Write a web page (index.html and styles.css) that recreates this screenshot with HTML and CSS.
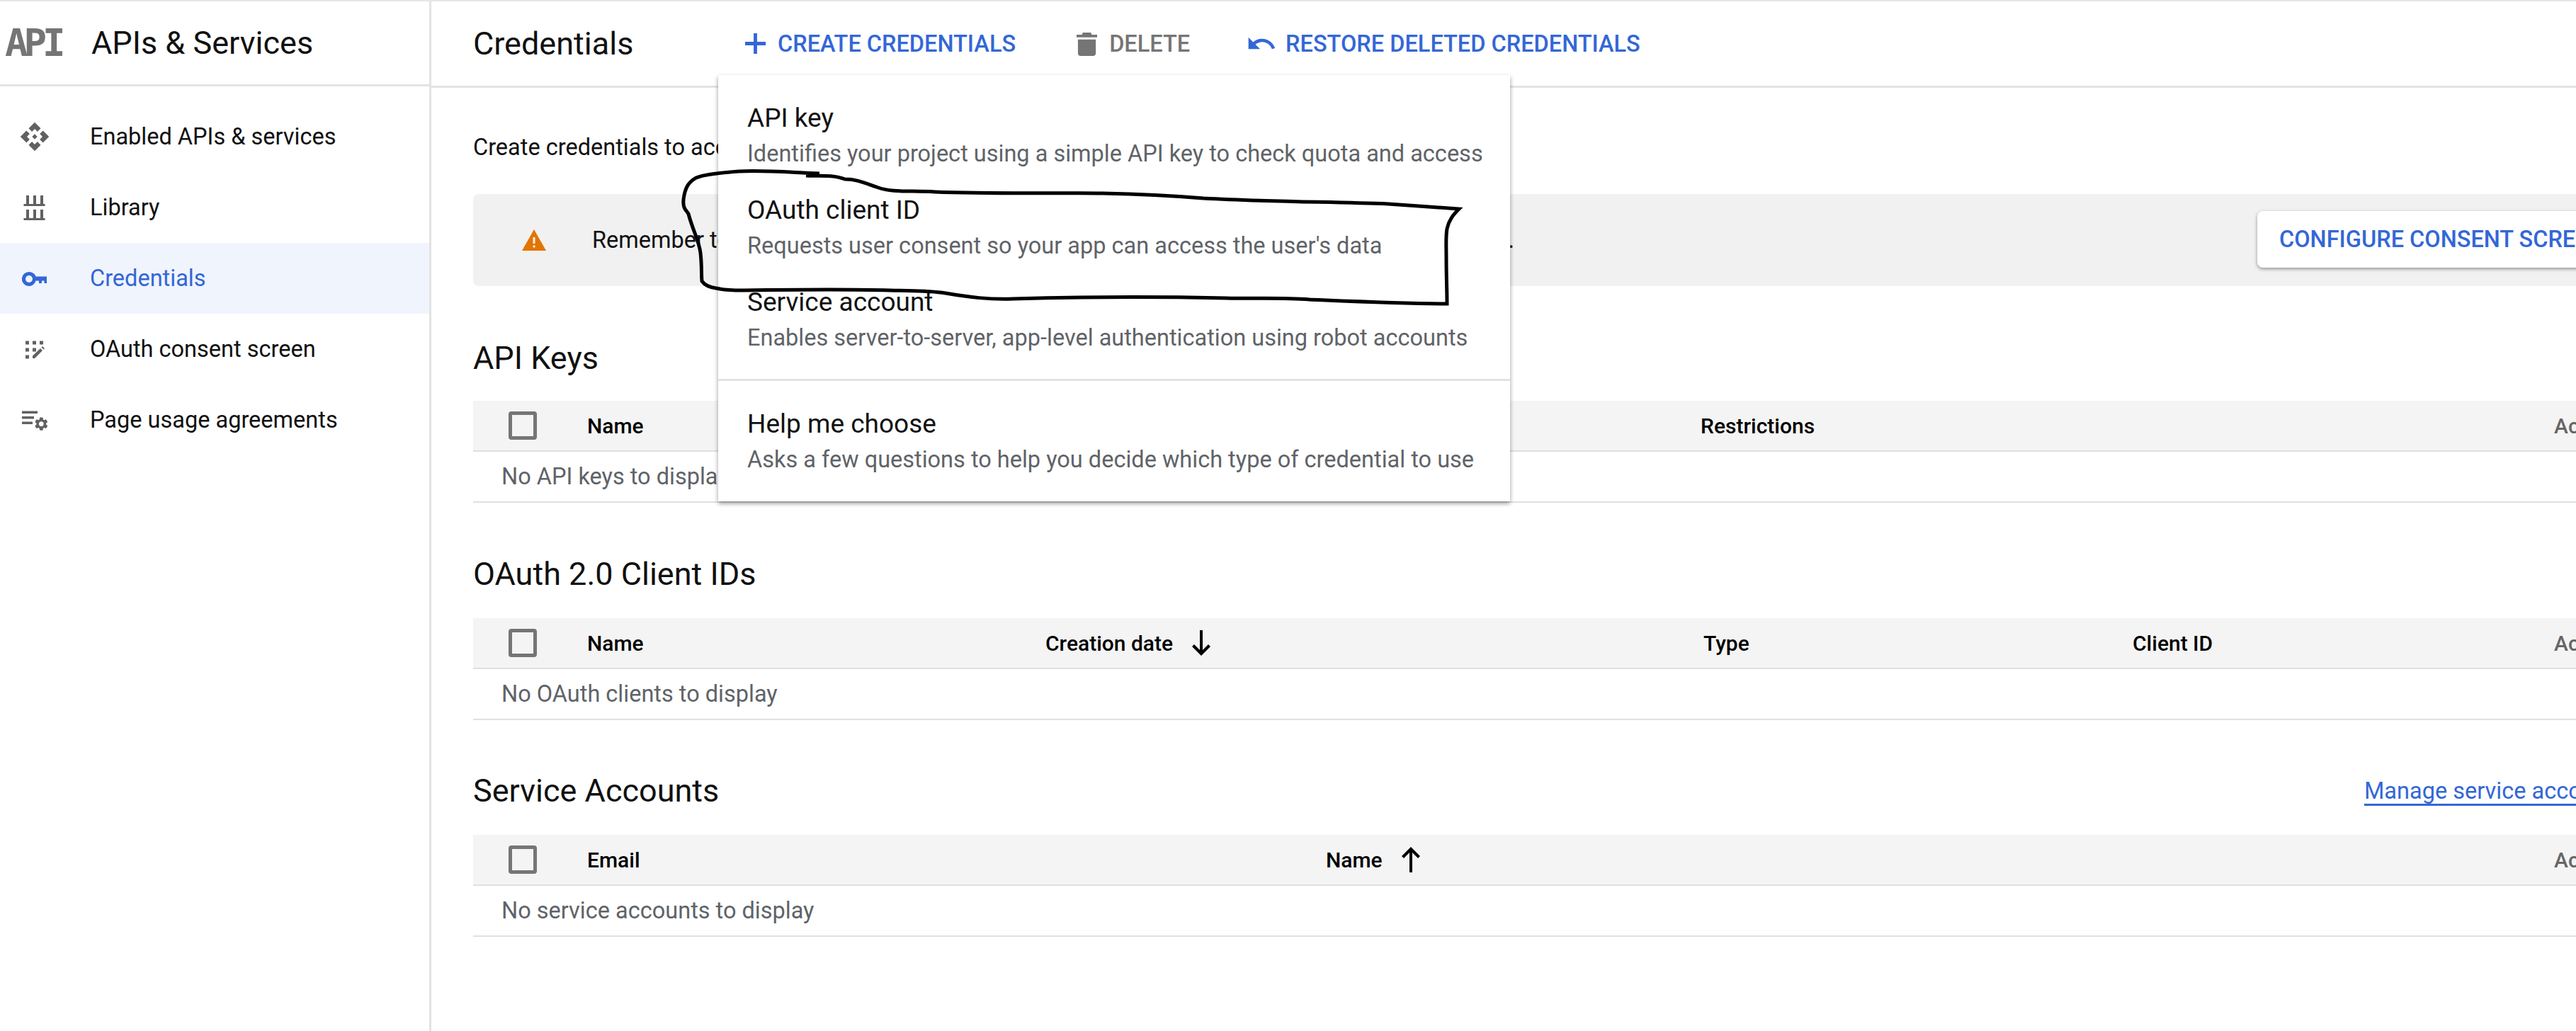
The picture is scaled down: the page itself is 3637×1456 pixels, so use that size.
FILE: index.html
```html
<!DOCTYPE html>
<html lang="en">
<head>
    <meta charset="UTF-8">
    <meta name="viewport" content="width=device-width, initial-scale=1.0">
    <title>Credentials</title>
    <link rel="stylesheet" href="styles.css">
</head>
<body>
    <aside class="sidebar">
        <div class="product">
            <span class="api-logo">API</span>
            <span class="product-name">APIs &amp; Services</span>
        </div>
        <nav class="nav">
            <a class="nav-item">
                <svg class="nav-icon" viewBox="0 0 24 24"><path d="M14 12l-2 2-2-2 2-2 2 2zm-2-6l2.12 2.12 2.5-2.5L12 1 7.38 5.62l2.5 2.5L12 6zm-6 6l2.12-2.12-2.5-2.5L1 12l4.62 4.62 2.5-2.5L6 12zm12 0l-2.12 2.12 2.5 2.5L23 12l-4.62-4.62-2.5 2.5L18 12zm-6 6l-2.12-2.12-2.5 2.5L12 23l4.62-4.62-2.5-2.5L12 18z"/></svg>
                Enabled APIs &amp; services
            </a>
            <a class="nav-item">
                <svg class="nav-icon" viewBox="0 0 44 44"><path d="M10 5h4v13h-4zM20 5h4v13h-4zM30 5h4v13h-4zM6.500 17h30v3h-30zM10 25h4v13h-4zM20 25h4v13h-4zM30 25h4v13h-4zM6.500 37h30v3h-30z"/></svg>
                Library
            </a>
            <a class="nav-item active">
                <svg class="nav-icon" viewBox="0 0 44 44"><path d="M14 13a10 10 0 0 1 9.500 6.500H39V29h-3.500v-3.500H32V29h-4v-3.500h-4.500A10 10 0 1 1 14 13zm0 5a5 5 0 1 0 0 10 5 5 0 0 0 0-10z"/></svg>
                Credentials
            </a>
            <a class="nav-item">
                <svg class="nav-icon" viewBox="0 0 44 44"><path d="M9 10.500h5v5H9zM19 10.500h5v5h-5zM29 10.500h5v5h-5zM9 20.500h5v5H9zM19 20.500h5v5h-5zM9 30.500h5v5H9zM19 31.500l11-10.500 3 3-11 11h-3zM31.500 19.500l1.500-1.500 3 3-1.500 1.500z"/></svg>
                OAuth consent screen
            </a>
            <a class="nav-item">
                <svg class="nav-icon" viewBox="0 0 44 44"><path d="M4 9.500h22v3.500H4zM4 17h17v3.500H4zM4 24.500h15V28H4z"/><path transform="translate(31.300 27.700) scale(.95) translate(-12 -12)" d="M19.140 12.940c.04-.3.06-.61.06-.94 0-.32-.02-.64-.07-.94l2.030-1.580c.18-.14.23-.41.12-.61l-1.920-3.320c-.12-.22-.37-.29-.59-.22l-2.390.96c-.5-.38-1.030-.7-1.620-.94l-.36-2.540c-.04-.24-.24-.41-.48-.41h-3.840c-.24 0-.43.17-.47.41l-.36 2.540c-.59.24-1.130.57-1.620.94l-2.390-.96c-.22-.08-.47 0-.59.22L2.740 8.870c-.12.21-.08.47.12.61l2.030 1.580c-.05.3-.09.63-.09.94s.02.64.07.94l-2.030 1.580c-.18.14-.23.41-.12.61l1.920 3.320c.12.22.37.29.59.22l2.390-.96c.5.38 1.030.7 1.620.94l.36 2.540c.05.24.24.41.48.41h3.840c.24 0 .44-.17.47-.41l.36-2.540c.59-.24 1.130-.56 1.620-.94l2.390.96c.22.08.47 0 .59-.22l1.920-3.320c.12-.22.07-.47-.12-.61l-2.010-1.580zM12 15.600c-1.980 0-3.600-1.620-3.600-3.600s1.620-3.600 3.600-3.600 3.600 1.620 3.600 3.600-1.620 3.600-3.600 3.600z"/></svg>
                Page usage agreements
            </a>
        </nav>
    </aside>

    <div class="page">
        <header class="toolbar">
            <h1 class="page-title">Credentials</h1>
            <div class="actions">
                <button class="action create">
                    <svg class="action-icon" viewBox="0 0 32 32"><path d="M13.500 1h5v12.500H31v5H18.500V31h-5V18.500H1v-5h12.500z"/></svg>
                    Create credentials
                </button>
                <button class="action delete">
                    <svg class="action-icon" viewBox="0 0 32 36"><path d="M10 2h12l1 3h8v4H1V5h8zM3 12h26v20a4 4 0 0 1-4 4H7a4 4 0 0 1-4-4z"/></svg>
                    Delete
                </button>
                <button class="action restore">
                    <svg class="action-icon wide" viewBox="0 0 24 24"><path d="M12.500 8c-2.650 0-5.050.99-6.900 2.600L2 7v9h9l-3.620-3.620c1.390-1.160 3.160-1.880 5.120-1.880 3.540 0 6.550 2.310 7.600 5.500l2.370-.78C21.080 11.030 17.150 8 12.500 8z"/></svg>
                    Restore deleted credentials
                </button>
            </div>
        </header>

        <main class="content">
            <p class="intro">Create credentials to access your enabled APIs</p>

            <div class="banner">
                <svg class="banner-icon" viewBox="0 0 34 30"><path fill-rule="evenodd" d="M17 0l17 30H0zM15.500 11v9h3v-9zM15.500 22.500v3h3v-3z"/></svg>
                <span class="banner-text">Remember to configure the OAuth consent screen with information about your application.</span>
                <button class="banner-button">Configure consent screen</button>
            </div>

            <section class="block keys">
                <h2 class="block-title">API Keys</h2>
                <div class="table">
                    <div class="table-head">
                        <span class="check"></span>
                        <span class="col col-first">Name</span>
                        <span class="col col-restrictions">Restrictions</span>
                        <span class="col col-actions">Actions</span>
                    </div>
                    <div class="table-empty">No API keys to display</div>
                </div>
            </section>

            <section class="block clients">
                <h2 class="block-title">OAuth 2.0 Client IDs</h2>
                <div class="table">
                    <div class="table-head">
                        <span class="check"></span>
                        <span class="col col-first">Name</span>
                        <span class="col col-date">Creation date
                            <svg class="sort" viewBox="0 0 30 36"><path d="M13 0h4v28l8-8 3 3-13 13L2 23l3-3 8 8z"/></svg>
                        </span>
                        <span class="col col-type">Type</span>
                        <span class="col col-client">Client ID</span>
                        <span class="col col-actions">Actions</span>
                    </div>
                    <div class="table-empty">No OAuth clients to display</div>
                </div>
            </section>

            <section class="block accounts">
                <div class="block-top">
                    <h2 class="block-title">Service Accounts</h2>
                    <a class="manage">Manage service accounts</a>
                </div>
                <div class="table">
                    <div class="table-head">
                        <span class="check"></span>
                        <span class="col col-first">Email</span>
                        <span class="col col-name">Name
                            <svg class="sort" viewBox="0 0 30 36"><path d="M13 36h4V8l8 8 3-3L15 0 2 13l3 3 8-8z"/></svg>
                        </span>
                        <span class="col col-actions">Actions</span>
                    </div>
                    <div class="table-empty">No service accounts to display</div>
                </div>
            </section>
        </main>
    </div>

    <div class="menu">
        <div class="menu-item">
            <div class="menu-title">API key</div>
            <div class="menu-desc">Identifies your project using a simple API key to check quota and access</div>
        </div>
        <div class="menu-item">
            <div class="menu-title">OAuth client ID</div>
            <div class="menu-desc">Requests user consent so your app can access the user's data</div>
        </div>
        <div class="menu-item">
            <div class="menu-title">Service account</div>
            <div class="menu-desc">Enables server-to-server, app-level authentication using robot accounts</div>
        </div>
        <div class="menu-item help">
            <div class="menu-title">Help me choose</div>
            <div class="menu-desc">Asks a few questions to help you decide which type of credential to use</div>
        </div>
    </div>

    <!-- pen scribble drawn over the screenshot -->
    <svg class="scribble" viewBox="0 0 3637 1456">
        <path d="M1157 245C1110 243 1075 240 1043 242C1015 244 995 246 983 251C972 257 967 265 965 282C964 294 968 296 972 302C978 325 987 340 989 357C991 375 990 385 991 397C996 404 1003 406 1011 407C1025 410 1035 410 1047 410C1120 409 1190 408 1256 410C1290 411 1310 410 1335 414C1370 420 1395 423 1430 422C1530 419 1640 419 1731 421C1775 422 1810 420 1849 423C1920 426 1985 429 2043 429C2043 410 2042 390 2042 367C2042 345 2041 335 2043 323C2046 310 2052 303 2060 295C2030 293 1990 290 1960 288C1880 285 1790 285 1699 280C1650 276 1605 274 1557 273C1480 272 1400 274 1320 271C1285 269 1260 272 1240 265C1222 259 1210 253 1193 253C1175 246 1155 249 1138 248"/>
    </svg>
</body>
</html>
```

FILE: styles.css
```css
* {
    box-sizing: border-box;
}

html, body {
    height: 100%;
    overflow: hidden;
}

body {
    margin: 0;
    display: flex;
    position: relative;
    background-color: #fff;
    border-top: 2px solid #e6e6e6;
    color: #111;
    font-family: Roboto, "Liberation Sans", sans-serif;
    font-size: 32.5px;
}

.sidebar {
    width: 609px;
    flex: none;
    border-right: 3px solid #e3e3e3;
}

.product {
    height: 120px;
    display: flex;
    align-items: center;
    border-bottom: 3px solid #e3e3e3;
    margin-right: -3px;
}

.api-logo {
    width: 129px;
    padding-left: 7px;
    color: #757575;
    font-family: "DejaVu Sans Mono", monospace;
    font-weight: 700;
    font-size: 54px;
    line-height: 40px;
    letter-spacing: -6px;
}

.product-name {
    font-size: 45px;
}

.nav {
    padding-top: 21px;
}

.nav-item {
    height: 100px;
    display: flex;
    align-items: center;
    gap: 56px;
    padding-left: 27px;
}

.nav-icon {
    width: 44px;
    height: 44px;
    flex: none;
    fill: #616161;
}

.nav-item.active {
    background-color: #f0f4fd;
    color: #3367d6;
}

.nav-item.active .nav-icon {
    fill: #3367d6;
}

.page {
    flex: 1;
    min-width: 0;
}

.toolbar {
    height: 122px;
    display: flex;
    align-items: center;
    padding-left: 59px;
    border-bottom: 3px solid #e3e3e3;
}

.page-title {
    margin: 0;
    width: 383px;
    font-size: 45px;
    font-weight: 400;
}

.actions {
    display: flex;
    align-items: center;
    gap: 85px;
}

button {
    border: none;
    background: none;
    padding: 0;
    font-family: inherit;
    cursor: pointer;
}

.action {
    display: flex;
    align-items: center;
    gap: 16px;
    font-size: 32.5px;
    font-weight: 500;
    text-transform: uppercase;
}

.action-icon {
    width: 31px;
    height: 35px;
}

.action-icon.wide {
    width: 44px;
    height: 44px;
}

.create {
    color: #3367d6;
    fill: #3367d6;
}

.delete {
    color: #757575;
    fill: #757575;
}

.restore {
    margin-left: -6px;
    gap: 12px;
    color: #3367d6;
    fill: #3367d6;
}

.content {
    padding-left: 59px;
}

.intro {
    margin: 0;
    padding-top: 65px;
    line-height: 38px;
}

.banner {
    height: 130px;
    margin-top: 47px;
    display: flex;
    align-items: center;
    background-color: #f1f1f1;
    border-radius: 8px 0 0 8px;
    padding-left: 69px;
    white-space: nowrap;
}

.banner-icon {
    width: 34px;
    height: 30px;
    flex: none;
    fill: #e37400;
}

.banner-text {
    margin-left: 65px;
    width: 2351px;
    flex: none;
}

.banner-button {
    height: 80px;
    margin-top: -3px;
    padding: 0 31px;
    flex: none;
    background-color: #fff;
    border-radius: 8px;
    box-shadow: 0 2px 5px rgba(0, 0, 0, .4);
    color: #3367d6;
    font-size: 32.5px;
    font-weight: 500;
    text-transform: uppercase;
}

.block-title {
    margin: 0;
    font-size: 45px;
    font-weight: 400;
    line-height: 54px;
}

.keys {
    padding-top: 75px;
}

.clients {
    padding-top: 74px;
}

.accounts {
    padding-top: 73px;
}

.block-top {
    display: flex;
    justify-content: space-between;
    align-items: center;
    white-space: nowrap;
}

.manage {
    position: absolute;
    left: 3338px;
    color: #3367d6;
    text-decoration: underline;
    text-underline-offset: 7px;
}

.table {
    margin-top: 33px;
}

.clients .table,
.accounts .table {
    margin-top: 35px;
}

.table-head {
    height: 72px;
    position: relative;
    display: flex;
    align-items: center;
    background-color: #f4f4f4;
    border-bottom: 2px solid #e0e0e0;
    font-size: 30px;
    font-weight: 500;
    color: #000;
    white-space: nowrap;
}

.check {
    width: 40px;
    height: 40px;
    margin-left: 50px;
    border: 5px solid #757575;
    border-radius: 4px;
}

.col {
    position: absolute;
    display: flex;
    align-items: center;
    gap: 25px;
}

.col-first {
    left: 161px;
}

.col-restrictions {
    left: 1733px;
}

.col-date {
    left: 808px;
}

.col-type {
    left: 1737px;
}

.col-client {
    left: 2343px;
}

.col-name {
    left: 1204px;
}

.col-actions {
    left: 2938px;
    color: #666;
}

.sort {
    width: 30px;
    height: 36px;
    fill: #000;
}

.table-empty {
    height: 72px;
    display: flex;
    align-items: center;
    padding-left: 40px;
    border-bottom: 2px solid #e0e0e0;
    color: #5f6368;
}

.menu {
    position: absolute;
    left: 1014px;
    top: 104px;
    width: 1118px;
    height: 602px;
    padding-top: 39px;
    background-color: #fff;
    box-shadow: 0 3px 6px rgba(0, 0, 0, .4);
}

.menu-item {
    height: 130px;
    padding: 0 41px;
    white-space: nowrap;
}

.menu-item.help {
    margin-top: 42px;
    position: relative;
}

.menu-item.help::before {
    content: "";
    position: absolute;
    left: 0;
    right: 0;
    top: -42px;
    border-top: 3px solid #e3e3e3;
}

.menu-title {
    font-size: 37px;
    line-height: 44px;
    color: #111;
}

.menu-desc {
    margin-top: 9px;
    font-size: 32.5px;
    line-height: 38px;
    color: #5f6368;
}

.scribble {
    position: absolute;
    left: 0;
    top: -2px;
    width: 3637px;
    height: 1456px;
    fill: none;
    stroke: #000;
    stroke-width: 5px;
    pointer-events: none;
}
```
